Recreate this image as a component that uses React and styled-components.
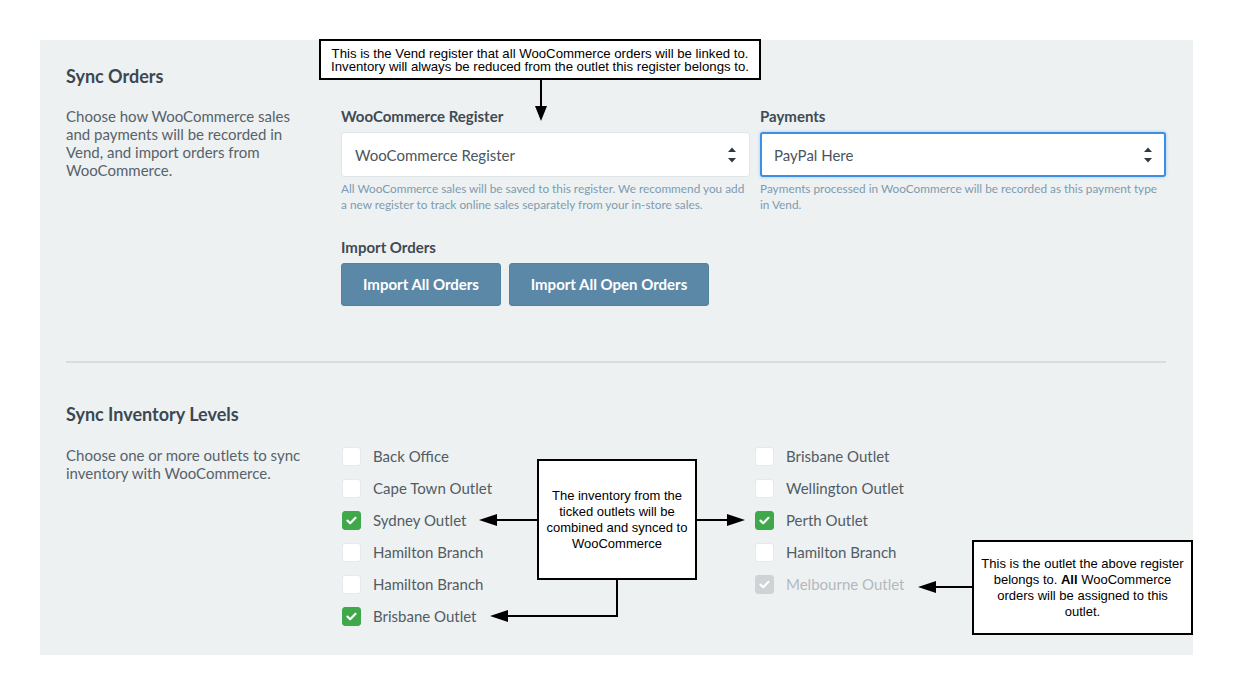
import styled, { createGlobalStyle } from "styled-components";

const GlobalStyle = createGlobalStyle`
  html, body {
    margin: 0;
    padding: 0;
    background: #fff;
  }
  body {
    font-family: Lato, "Noto Sans", sans-serif;
  }
  * {
    box-sizing: border-box;
  }
`;

const Page = styled.div`
  position: relative;
  width: 1233px;
  height: 695px;
  padding: 40px;
`;

const Panel = styled.div`
  background: #eef1f2;
  height: 615px;
  padding: 26px 27px 23px 26px;
`;

const Section = styled.section`
  display: grid;
  grid-template-columns: 275px 1fr;
  row-gap: ${(p) => p.$gap}px;
`;

const Heading = styled.h2`
  grid-column: 1 / 3;
  margin: 0;
  font-size: 18px;
  line-height: 20px;
  font-weight: 700;
  color: #3b4852;
`;

const Description = styled.p`
  margin: 0;
  padding-top: ${(p) => p.$offset || 0}px;
  font-size: 15px;
  line-height: 18px;
  color: #57626b;
  padding-right: 40px;
`;

const Fields = styled.div`
  display: grid;
  grid-template-columns: 409px 406px;
  column-gap: 10px;
  align-items: start;
`;

const Field = styled.div`
  display: flex;
  flex-direction: column;
`;

const Label = styled.div`
  font-size: 15px;
  line-height: 18px;
  font-weight: 700;
  color: #3f4a53;
  margin-bottom: 7px;
`;

const SelectBox = styled.div`
  height: 45px;
  background: #fff;
  border: ${(p) => (p.$focus ? "2px solid #3b8fe5" : "1px solid #e0e5e7")};
  box-shadow: ${(p) => (p.$focus ? "0 0 3px rgba(59,143,229,0.5)" : "none")};
  border-radius: 3px;
  display: flex;
  align-items: center;
  justify-content: space-between;
  padding: 0 ${(p) => (p.$focus ? 10 : 11)}px 0 ${(p) => (p.$focus ? 12 : 13)}px;
  font-size: 15px;
  color: #4b555d;
`;

const Help = styled.div`
  margin-top: 4px;
  font-size: 11.8px;
  line-height: 16px;
  color: #7d9bb1;
`;

const ImportBlock = styled.div`
  grid-column: 1 / 3;
  margin-top: 25px;
`;

const ButtonRow = styled.div`
  display: flex;
  gap: 8px;
`;

const Button = styled.button`
  width: ${(p) => p.$w}px;
  height: 43px;
  padding: 0 0 1px;
  background: #5c88a7;
  border: 1px solid #5581a0;
  border-radius: 3px;
  color: #fff;
  font-family: Lato, "Noto Sans", sans-serif;
  font-size: 15px;
  font-weight: 700;
  cursor: pointer;
`;

const Divider = styled.hr`
  border: none;
  height: 2px;
  background: #d7dee0;
  margin: 55px 0 41px;
`;

const CheckGrid = styled.div`
  display: grid;
  grid-template-columns: 413px 1fr;
`;

const CheckColumn = styled.div`
  display: flex;
  flex-direction: column;
`;

const CheckRow = styled.label`
  height: 32px;
  display: flex;
  align-items: center;
  gap: 12px;
  padding-left: 1px;
  font-size: 15px;
  color: ${(p) => (p.$disabled ? "#b3b9be" : "#515c65")};
`;

const Box = styled.span`
  width: 19px;
  height: 19px;
  border-radius: 3px;
  background: ${(p) => (p.$disabled ? "#cfd3d6" : p.$checked ? "#3ea84b" : "#fff")};
  border: 1px solid ${(p) => (p.$disabled ? "#cfd3d6" : p.$checked ? "#3ea84b" : "#e6eaec")};
  display: flex;
  align-items: center;
  justify-content: center;
`;

const Note = styled.div`
  position: absolute;
  left: ${(p) => p.$x}px;
  top: ${(p) => p.$y}px;
  width: ${(p) => p.$w}px;
  height: ${(p) => p.$h}px;
  background: #fff;
  border: 2px solid #000;
  display: flex;
  align-items: center;
  justify-content: center;
  text-align: center;
  font-family: "Liberation Sans", Arial, sans-serif;
  font-size: ${(p) => p.$size}px;
  line-height: ${(p) => p.$lh}px;
  color: #000;
  padding: 0 4px;
`;

const Arrows = styled.svg`
  position: absolute;
  left: 0;
  top: 0;
  pointer-events: none;
`;

const Chevrons = () => (
  <svg width="12" height="24" viewBox="0 0 12 24">
    <path d="M2 9 L6 4.5 L10 9 Z" fill="#2e3942" />
    <path d="M2 15 L6 19.5 L10 15 Z" fill="#2e3942" />
  </svg>
);

const Check = () => (
  <svg width="11" height="9" viewBox="0 0 11 9">
    <path d="M1.5 4.6 L4.2 7.2 L9.5 1.8" fill="none" stroke="#fff" strokeWidth="2.2" strokeLinecap="round" strokeLinejoin="round" />
  </svg>
);

const leftOutlets = [
  { name: "Back Office" },
  { name: "Cape Town Outlet" },
  { name: "Sydney Outlet", checked: true },
  { name: "Hamilton Branch" },
  { name: "Hamilton Branch" },
  { name: "Brisbane Outlet", checked: true },
];

const rightOutlets = [
  { name: "Brisbane Outlet" },
  { name: "Wellington Outlet" },
  { name: "Perth Outlet", checked: true },
  { name: "Hamilton Branch" },
  { name: "Melbourne Outlet", checked: true, disabled: true },
];

const Outlet = ({ item }) => (
  <CheckRow $disabled={item.disabled}>
    <Box $checked={item.checked} $disabled={item.disabled}>
      {item.checked && <Check />}
    </Box>
    {item.name}
  </CheckRow>
);

export default function App() {
  return (
    <Page>
      <GlobalStyle />
      <Panel>
        <Section $gap={21}>
          <Heading>Sync Orders</Heading>
          <Description>
            Choose how WooCommerce sales and payments will be recorded in Vend, and import orders from WooCommerce.
          </Description>
          <Fields>
            <Field>
              <Label>WooCommerce Register</Label>
              <SelectBox>
                WooCommerce Register
                <Chevrons />
              </SelectBox>
              <Help>
                All WooCommerce sales will be saved to this register. We recommend you add a new register to track
                online sales separately from your in-store sales.
              </Help>
            </Field>
            <Field>
              <Label>Payments</Label>
              <SelectBox $focus>
                PayPal Here
                <Chevrons />
              </SelectBox>
              <Help>Payments processed in WooCommerce will be recorded as this payment type in Vend.</Help>
            </Field>
            <ImportBlock>
              <Label>Import Orders</Label>
              <ButtonRow>
                <Button $w={160}>Import All Orders</Button>
                <Button $w={200}>Import All Open Orders</Button>
              </ButtonRow>
            </ImportBlock>
          </Fields>
        </Section>

        <Divider />

        <Section $gap={16}>
          <Heading>Sync Inventory Levels</Heading>
          <Description $offset={6}>Choose one or more outlets to sync inventory with WooCommerce.</Description>
          <CheckGrid>
            <CheckColumn>
              {leftOutlets.map((o, i) => (
                <Outlet key={i} item={o} />
              ))}
            </CheckColumn>
            <CheckColumn>
              {rightOutlets.map((o, i) => (
                <Outlet key={i} item={o} />
              ))}
            </CheckColumn>
          </CheckGrid>
        </Section>
      </Panel>

      <Arrows width="1233" height="695">
        <g stroke="#000" strokeWidth="2" fill="none">
          <line x1="541" y1="80" x2="541" y2="108" />
          <line x1="537" y1="520" x2="495" y2="520" />
          <line x1="697" y1="520" x2="729" y2="520" />
          <polyline points="617,580 617,616 506,616" />
          <line x1="972" y1="587" x2="934" y2="587" />
        </g>
        <g fill="#000">
          <polygon points="535,106 547,106 541,121" />
          <polygon points="479,520 497,514 497,526" />
          <polygon points="745,520 727,514 727,526" />
          <polygon points="490,616 508,610 508,622" />
          <polygon points="918,587 936,581 936,593" />
        </g>
      </Arrows>

      <Note $x={319} $y={39} $w={442} $h={41} $size={13.2} $lh={13}>
        This is the Vend register that all WooCommerce orders will be linked to.
        <br />
        Inventory will always be reduced from the outlet this register belongs to.
      </Note>
      <Note $x={537} $y={459} $w={160} $h={121} $size={13} $lh={16}>
        The inventory from the ticked outlets will be combined and synced to WooCommerce
      </Note>
      <Note $x={972} $y={540} $w={221} $h={95} $size={13} $lh={16}>
        <span>
          This is the outlet the above register belongs to. <b>All</b> WooCommerce orders will be assigned to this
          outlet.
        </span>
      </Note>
    </Page>
  );
}
